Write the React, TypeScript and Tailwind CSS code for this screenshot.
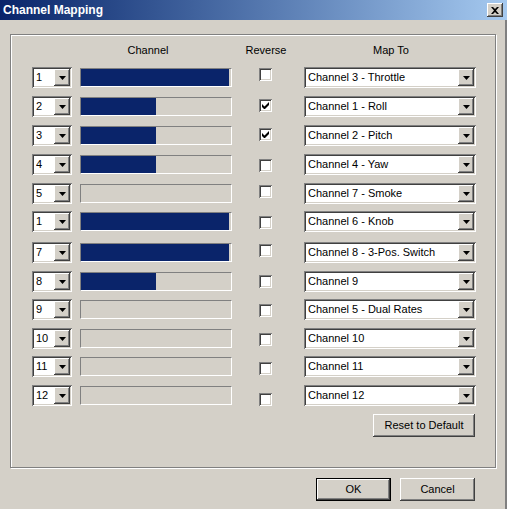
import React from 'react'

const raised =
  'shadow-[inset_-1px_-1px_#404040,inset_1px_1px_#ffffff,inset_-2px_-2px_#808080,inset_2px_2px_#d4d0c8]'
const sunken =
  'shadow-[inset_1px_1px_#808080,inset_-1px_-1px_#ffffff,inset_2px_2px_#404040,inset_-2px_-2px_#d4d0c8]'

type Row = {
  num: string
  fill: 'full' | 'half' | 'none'
  rev: boolean
  map: string
  h: string
  cb: string
}

const rows: Row[] = [
  { num: '1', fill: 'full', rev: false, map: 'Channel 3 - Throttle', h: 'h-[29px]', cb: 'mt-[1px]' },
  { num: '2', fill: 'half', rev: true, map: 'Channel 1 - Roll', h: 'h-[29px]', cb: 'mt-[3px]' },
  { num: '3', fill: 'half', rev: true, map: 'Channel 2 - Pitch', h: 'h-[29px]', cb: 'mt-[3px]' },
  { num: '4', fill: 'half', rev: false, map: 'Channel 4 - Yaw', h: 'h-[29px]', cb: 'mt-[5px]' },
  { num: '5', fill: 'none', rev: false, map: 'Channel 7 - Smoke', h: 'h-[28px]', cb: 'mt-[2px]' },
  { num: '1', fill: 'full', rev: false, map: 'Channel 6 - Knob', h: 'h-[31px]', cb: 'mt-[5px]' },
  { num: '7', fill: 'full', rev: false, map: 'Channel 8 - 3-Pos. Switch', h: 'h-[29px]', cb: 'mt-[2px]' },
  { num: '8', fill: 'half', rev: false, map: 'Channel 9', h: 'h-[28px]', cb: 'mt-[4px]' },
  { num: '9', fill: 'none', rev: false, map: 'Channel 5 - Dual Rates', h: 'h-[29px]', cb: 'mt-[5px]' },
  { num: '10', fill: 'none', rev: false, map: 'Channel 10', h: 'h-[28px]', cb: 'mt-[5px]' },
  { num: '11', fill: 'none', rev: false, map: 'Channel 11', h: 'h-[29px]', cb: 'mt-[6px]' },
  { num: '12', fill: 'none', rev: false, map: 'Channel 12', h: 'h-[29px]', cb: 'mt-[8px]' },
]

function Arrow() {
  return (
    <svg width="7" height="4" viewBox="0 0 7 4">
      <path d="M0 0h7L3.5 4z" fill="#000" />
    </svg>
  )
}

function Combo({ value, width }: { value: string; width: string }) {
  return (
    <div className={`relative flex h-[21px] ${width} items-center bg-white pl-[4px] ${sunken}`}>
      <span className="flex-1 truncate leading-none">{value}</span>
      <div className={`mr-[2px] flex h-[17px] w-[16px] shrink-0 items-center justify-center bg-[#d4d0c8] ${raised}`}>
        <Arrow />
      </div>
    </div>
  )
}

function Bar({ fill }: { fill: Row['fill'] }) {
  return (
    <div className="flex h-[19px] w-[152px] border border-t-[#808080] border-l-[#808080] border-b-white border-r-white p-[0px]">
      {fill === 'full' && <div className="h-full w-[148px] bg-[#0a246a]" />}
      {fill === 'half' && <div className="h-full w-[75px] bg-[#0a246a]" />}
    </div>
  )
}

function Check({ on, cls }: { on: boolean; cls: string }) {
  return (
    <div className={`${cls} flex h-[13px] w-[13px] items-center justify-center bg-white ${sunken}`}>
      {on && (
        <svg width="7" height="7" viewBox="0 0 7 7">
          <path d="M0 2v3l2 2h1l4-4V0L2.5 4.5z" fill="#000" />
        </svg>
      )}
    </div>
  )
}

function Button({ label, def, width }: { label: string; def?: boolean; width: string }) {
  return (
    <button
      className={`flex h-[23px] ${width} items-center justify-center bg-[#d4d0c8] ${
        def
          ? 'shadow-[inset_0_0_0_1px_#000000,inset_-2px_-2px_#404040,inset_2px_2px_#ffffff,inset_-3px_-3px_#808080]'
          : raised
      }`}
    >
      {label}
    </button>
  )
}

export default function App() {
  return (
    <div className="flex h-[509px] w-[507px] flex-col bg-[#d4d0c8] text-[11px] text-black font-['Liberation_Sans',Arial,sans-serif]">
      {/* title bar */}
      <div className="flex h-[20px] items-center justify-between bg-gradient-to-r from-[#0a246a] to-[#a6caf0] pl-[3px] pr-[4px]">
        <span className="text-[12px] font-bold text-white">Channel Mapping</span>
        <div className={`flex h-[14px] w-[16px] items-center justify-center bg-[#d4d0c8] ${raised}`}>
          <svg width="8" height="7" viewBox="0 0 8 7">
            <path d="M0 0h2l2 2 2-2h2L5 3.5 8 7H6L4 5 2 7H0l3-3.5z" fill="#000" />
          </svg>
        </div>
      </div>

      <div className="flex flex-1 flex-col border-r-2 border-r-[#808080] px-[10px] pt-[14px]">
        {/* group box */}
        <div className="flex h-[434px] w-[486px] flex-col border border-[#808080] shadow-[1px_1px_#ffffff,inset_1px_1px_#ffffff]">
          <div className="flex h-[32px] items-start pt-[8px] leading-[14px]">
            <span className="ml-[97px] w-[80px] text-center">Channel</span>
            <span className="ml-[48px] w-[60px] text-center">Reverse</span>
            <span className="ml-[55px] w-[80px] text-center">Map To</span>
          </div>
          {rows.map((r, i) => (
            <div key={i} className={`flex ${r.h} items-start pl-[21px]`}>
              <Combo value={r.num} width="w-[40px]" />
              <div className="ml-[8px] pt-[1px]">
                <Bar fill={r.fill} />
              </div>
              <div className="ml-[27px] w-[13px]">
                <Check on={r.rev} cls={r.cb} />
              </div>
              <div className="ml-[32px]">
                <Combo value={r.map} width="w-[172px]" />
              </div>
            </div>
          ))}
          <div className="mt-[0px] flex justify-end pr-[20px]">
            <Button label="Reset to Default" width="w-[102px]" />
          </div>
        </div>

        <div className="mt-[10px] flex justify-end gap-[9px] pr-[20px]">
          <Button label="OK" def width="w-[75px]" />
          <Button label="Cancel" width="w-[75px]" />
        </div>
      </div>
    </div>
  )
}
